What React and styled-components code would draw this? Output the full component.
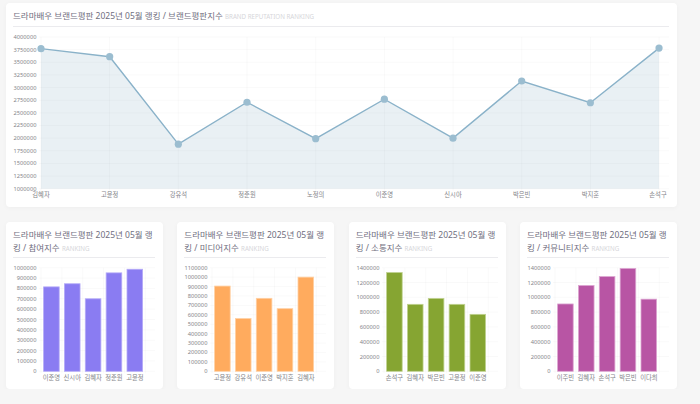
import React from "react";
import styled, { createGlobalStyle } from "styled-components";

const FONT = `"Noto Sans", "Noto Sans CJK KR", sans-serif`;

const Global = createGlobalStyle`
  html, body { margin: 0; padding: 0; background: #f6f6f6; font-family: ${FONT}; }
`;

const Page = styled.div`
  width: 671px;
  padding: 3px 23px 0 6px;
  display: flex;
  flex-direction: column;
  gap: 15px;
`;

const Card = styled.section`
  box-sizing: border-box;
  height: ${(p) => p.$height}px;
  padding: 7px 8px 0 7px;
  background: #fff;
  border-radius: 4px;
  box-shadow: 0 1px 5px rgba(0, 0, 0, 0.035);
  overflow: hidden;
`;

const Title = styled.h2`
  margin: 0;
  padding-bottom: ${(p) => p.$pad}px;
  border-bottom: 1px solid #ebebee;
  font-size: 8.5px;
  line-height: 12.5px;
  font-weight: 400;
  color: #6f6e7e;
  word-break: break-all;
`;

const Sub = styled.small`
  font-size: 6.2px;
  line-height: 0;
  color: #d6d6da;
`;

const Row = styled.div`
  display: grid;
  grid-template-columns: repeat(4, 157px);
  justify-content: space-between;
`;

const Plot = styled.svg`
  display: block;
`;

const Tick = styled.text`
  font-family: ${FONT};
  font-size: 5.7px;
  fill: #85858a;
`;

const Name = styled.text`
  font-family: ${FONT};
  font-size: 6.3px;
  fill: #85858a;
`;

const GridLine = styled.line`
  stroke: rgba(0, 0, 0, 0.035);
  stroke-width: 0.7;
`;

function ValueAxis({ x0, xEnd, y0, y1, max, min = 0, step }) {
  const ticks = [];
  for (let v = min; v <= max; v += step) ticks.push(v);
  const y = (v) => y0 + ((v - min) / (max - min)) * (y1 - y0);
  return (
    <g>
      {ticks.map((v) => (
        <g key={v}>
          <GridLine x1={x0 - 2} x2={xEnd} y1={y(v)} y2={y(v)} />
          <Tick x={x0 - 4.6} y={y(v) + 2} textAnchor="end">{v}</Tick>
        </g>
      ))}
    </g>
  );
}

const LINE_NAMES = ["김혜자", "고윤정", "강유석", "정준원", "노정의", "이준영", "신시아", "박은빈", "박지훈", "손석구"];
const LINE_VALUES = [3770000, 3610000, 1880000, 2710000, 1990000, 2770000, 2000000, 3130000, 2700000, 3780000];

function LineChart() {
  const x0 = 28, step = 68.67, top = 10, bottom = 161.7;
  const y = (v) => bottom - ((v - 1000000) / 3000000) * (bottom - top);
  const xs = LINE_VALUES.map((_, i) => x0 + i * step);
  const pts = LINE_VALUES.map((v, i) => `${xs[i]},${y(v)}`).join(" ");
  const area = `${x0},${bottom} ${pts} ${xs[9]},${bottom}`;
  return (
    <Plot width="656" height="175">
      <polygon points={area} fill="#e9f0f4" />
      <ValueAxis x0={x0} xEnd={656} y0={bottom} y1={top} max={4000000} min={1000000} step={250000} />
      {xs.map((x) => <GridLine key={x} x1={x} x2={x} y1={top} y2={bottom + 2} />)}
      <polyline points={pts} fill="none" stroke="#8ab2c9" strokeWidth="1.4" />
      {xs.map((x, i) => <circle key={x} cx={x} cy={y(LINE_VALUES[i])} r="3.6" fill="#9bbdd0" />)}
      {xs.map((x, i) => (
        <Name key={LINE_NAMES[i]} x={i === 9 ? x - 1 : x} y={bottom + 8.5} textAnchor="middle">{LINE_NAMES[i]}</Name>
      ))}
    </Plot>
  );
}

function BarChart({ names, values, max, step, color, edge }) {
  const x0 = 28, cat = 20.85, top = 9.7, bottom = 113.3;
  const y = (v) => bottom - (v / max) * (bottom - top);
  return (
    <Plot width="143" height="128">
      {names.concat("").map((_, i) => (
        <GridLine key={i} x1={x0 + i * cat} x2={x0 + i * cat} y1={top} y2={bottom + 2} />
      ))}
      <ValueAxis x0={x0} xEnd={142} y0={bottom} y1={top} max={max} step={step} />
      {values.map((v, i) => (
        <rect
          key={names[i]}
          x={x0 + cat * i + 2.6}
          y={y(v)}
          width={15.6}
          height={bottom - y(v)}
          fill={color}
          stroke={edge}
          strokeWidth="0.8"
        />
      ))}
      {names.map((n, i) => (
        <Name key={n} x={x0 + cat * (i + 0.5)} y={bottom + 8.5} textAnchor="middle">{n}</Name>
      ))}
    </Plot>
  );
}

const BARS = [
  { sub: "참여지수", names: ["이준영", "신시아", "김혜자", "정준원", "고윤정"], values: [815000, 845000, 700000, 950000, 985000], max: 1000000, step: 100000, color: "#8a7cf2", edge: "#b4aaf7" },
  { sub: "미디어지수", names: ["고윤정", "강유석", "이준영", "박지훈", "김혜자"], values: [905000, 560000, 775000, 665000, 1000000], max: 1100000, step: 100000, color: "#ffab5e", edge: "#ffd0a4" },
  { sub: "소통지수", names: ["손석구", "김혜자", "박은빈", "고윤정", "이준영"], values: [1335000, 905000, 985000, 905000, 770000], max: 1400000, step: 200000, color: "#86a532", edge: "#c0d291" },
  { sub: "커뮤니티지수", names: ["이주빈", "김혜자", "손석구", "박은빈", "이다희"], values: [910000, 1160000, 1280000, 1390000, 975000], max: 1400000, step: 200000, color: "#b855a4", edge: "#dca6d1" },
];

const PREFIX = "드라마배우 브랜드평판 2025년 05월 랭킹 / ";

export default function App() {
  return (
    <Page>
      <Global />
      <Card $height={204}>
        <Title $pad={3.5}>
          {PREFIX}브랜드평판지수 <Sub>BRAND REPUTATION RANKING</Sub>
        </Title>
        <LineChart />
      </Card>
      <Row>
        {BARS.map((b) => (
          <Card key={b.sub} $height={167}>
            <Title $pad={3}>
              {PREFIX}{b.sub} <Sub>RANKING</Sub>
            </Title>
            <BarChart {...b} />
          </Card>
        ))}
      </Row>
    </Page>
  );
}
